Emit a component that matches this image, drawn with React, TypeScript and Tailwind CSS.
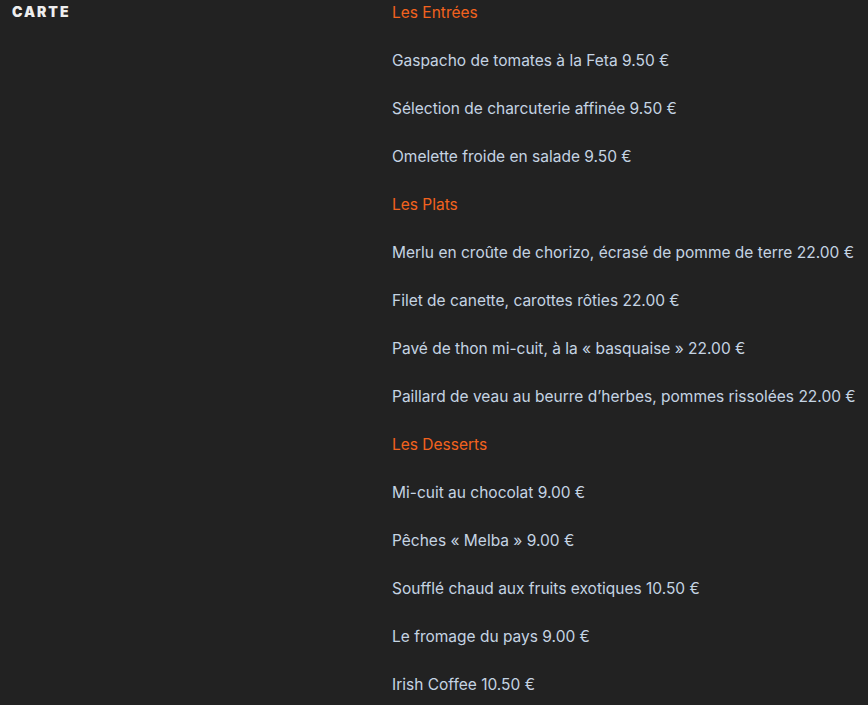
import React from "react";

const sections = [
  {
    title: "Les Entrées",
    items: [
      "Gaspacho de tomates à la Feta 9.50 €",
      "Sélection de charcuterie affinée 9.50 €",
      "Omelette froide en salade 9.50 €",
    ],
  },
  {
    title: "Les Plats",
    items: [
      "Merlu en croûte de chorizo, écrasé de pomme de terre 22.00 €",
      "Filet de canette, carottes rôties 22.00 €",
      "Pavé de thon mi-cuit, à la « basquaise » 22.00 €",
      "Paillard de veau au beurre d’herbes, pommes rissolées 22.00 €",
    ],
  },
  {
    title: "Les Desserts",
    items: [
      "Mi-cuit au chocolat 9.00 €",
      "Pêches « Melba » 9.00 €",
      "Soufflé chaud aux fruits exotiques 10.50 €",
      "Le fromage du pays 9.00 €",
      "Irish Coffee 10.50 €",
    ],
  },
];

const App = () => {
  return (
    <div className="min-h-[705px] bg-[#222222] font-['Inter',sans-serif] flex">
      {/* Title */}
      <div className="w-[392px] pl-3 pt-[4px]">
        <h2 className="text-[14px] font-black uppercase tracking-[0.14em] text-[#eeeeee] leading-[16px]">
          Carte
        </h2>
      </div>

      {/* Menu */}
      <div className="flex-1 pt-[1px]">
        {sections.map((section) => (
          <div key={section.title}>
            <p className="text-[15.5px] leading-[24px] text-[#f3621e] h-[48px]">
              {section.title}
            </p>
            {section.items.map((item) => (
              <p
                key={item}
                className="text-[15.5px] leading-[24px] text-[#c5d4e3] h-[48px] whitespace-nowrap"
              >
                {item}
              </p>
            ))}
          </div>
        ))}
      </div>
    </div>
  );
};

export default App;
